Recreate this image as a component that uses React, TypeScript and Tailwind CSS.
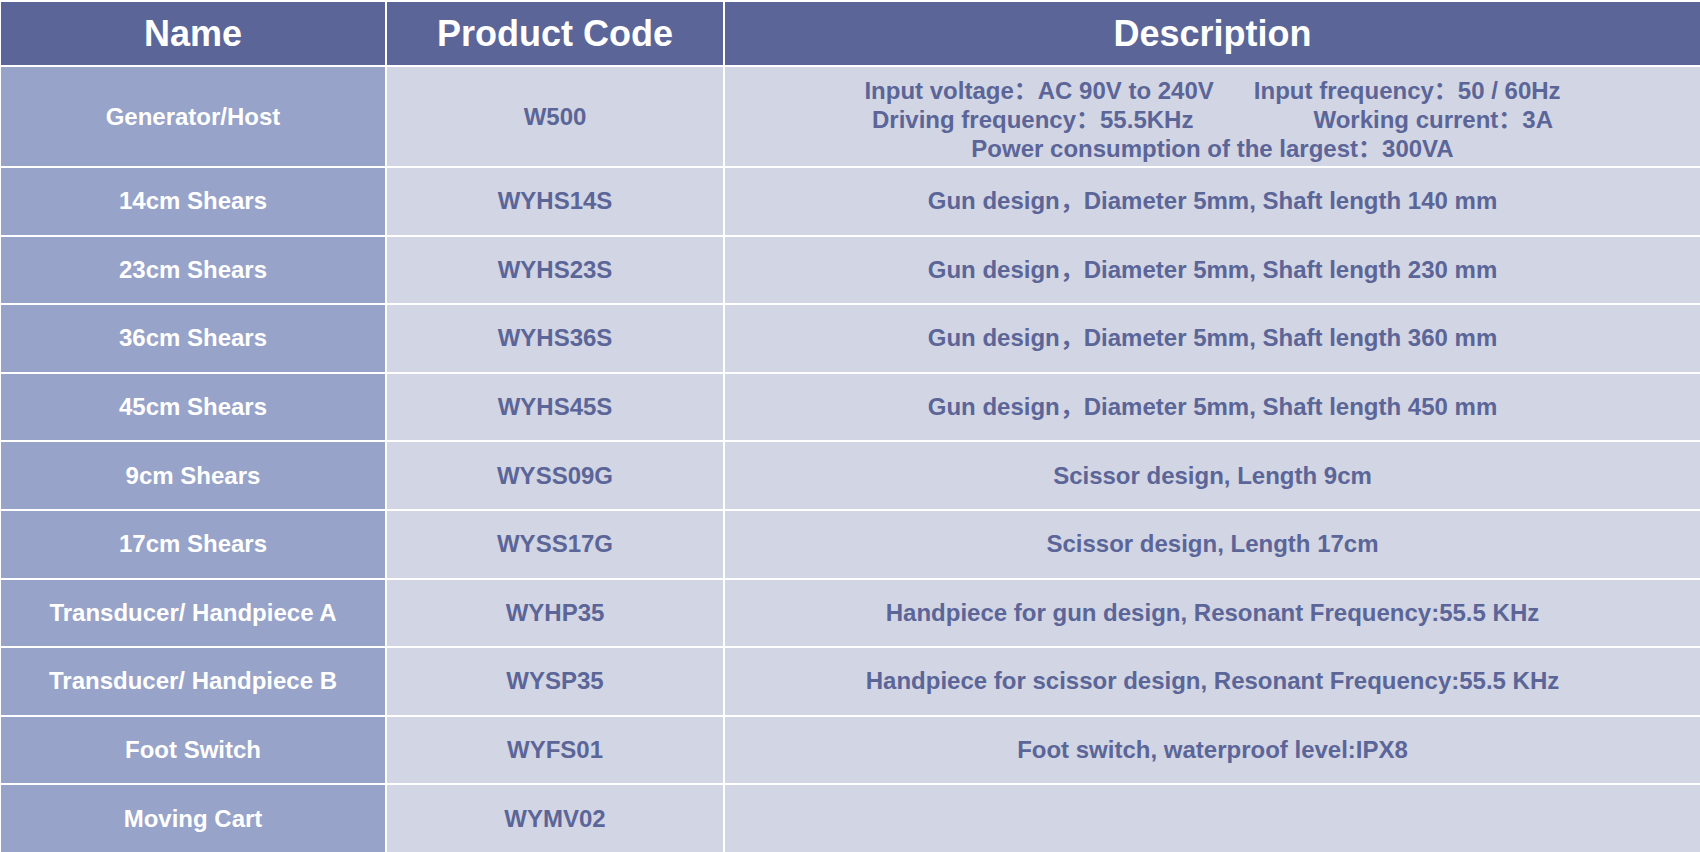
import { Fragment } from "react";

const rows = [
  { name: "14cm Shears", code: "WYHS14S", desc: "Gun design，Diameter 5mm, Shaft length 140 mm" },
  { name: "23cm Shears", code: "WYHS23S", desc: "Gun design，Diameter 5mm, Shaft length 230 mm" },
  { name: "36cm Shears", code: "WYHS36S", desc: "Gun design，Diameter 5mm, Shaft length 360 mm" },
  { name: "45cm Shears", code: "WYHS45S", desc: "Gun design，Diameter 5mm, Shaft length 450 mm" },
  { name: "9cm Shears", code: "WYSS09G", desc: "Scissor design, Length 9cm" },
  { name: "17cm Shears", code: "WYSS17G", desc: "Scissor design, Length 17cm" },
  { name: "Transducer/ Handpiece A", code: "WYHP35", desc: "Handpiece for gun design, Resonant Frequency:55.5 KHz" },
  { name: "Transducer/ Handpiece B", code: "WYSP35", desc: "Handpiece for scissor design, Resonant Frequency:55.5 KHz" },
  { name: "Foot Switch", code: "WYFS01", desc: "Foot switch, waterproof level:IPX8" },
  { name: "Moving Cart", code: "WYMV02", desc: "" },
];

function Head({ children }: { children: React.ReactNode }) {
  return (
    <div className="bg-[#5b6598] text-white text-[36px] font-bold flex items-center justify-center leading-none">
      {children}
    </div>
  );
}

function NameCell({ children }: { children: React.ReactNode }) {
  return (
    <div className="bg-[#97a3c8] text-white text-[24px] font-bold flex items-center justify-center leading-none">
      {children}
    </div>
  );
}

function Cell({ children }: { children?: React.ReactNode }) {
  return (
    <div className="bg-[#d2d5e3] text-[#5b6598] text-[24px] font-bold flex items-center justify-center leading-none whitespace-pre">
      {children}
    </div>
  );
}

export default function App() {
  return (
    <div className="h-screen w-screen bg-white pt-[2px] pl-[1px] overflow-hidden font-['Liberation_Sans','Noto_Sans_CJK_SC',sans-serif]">
      <div className="h-full grid grid-cols-[384px_336px_1fr] grid-rows-[63px_99px_repeat(10,1fr)] gap-[2px]">
        {/* header */}
        <Head>Name</Head>
        <Head>Product Code</Head>
        <Head>Description</Head>

        {/* generator row, three lines of specs */}
        <NameCell>Generator/Host</NameCell>
        <Cell>W500</Cell>
        <div className="bg-[#d2d5e3] text-[#5b6598] text-[24px] font-bold flex flex-col items-center justify-center leading-[29px] whitespace-pre pt-[5px]">
          <span>{"Input voltage：AC 90V to 240V      Input frequency：50 / 60Hz"}</span>
          <span>{"Driving frequency：55.5KHz                  Working current：3A"}</span>
          <span>{"Power consumption of the largest：300VA"}</span>
        </div>

        {rows.map((r) => (
          <Fragment key={r.code}>
            <NameCell>{r.name}</NameCell>
            <Cell>{r.code}</Cell>
            <Cell>{r.desc}</Cell>
          </Fragment>
        ))}
      </div>
    </div>
  );
}
